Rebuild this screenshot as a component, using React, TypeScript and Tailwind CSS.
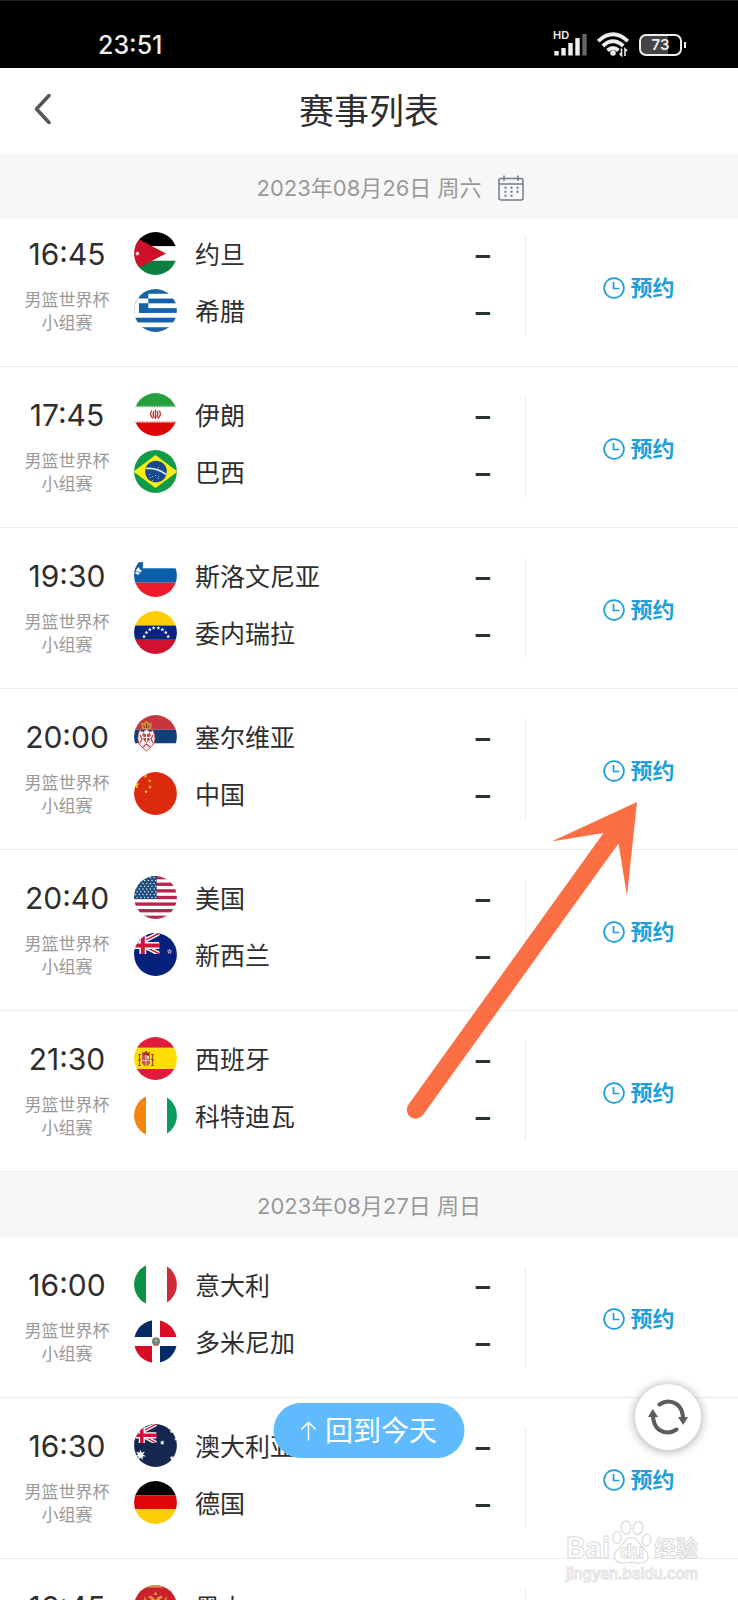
import { useId } from "react";
import type { ReactNode } from "react";

type Match = { time: string; home: [string, string]; away?: [string, string] };
type Day = { label: string; calendar?: boolean; matches: Match[] };

const days: Day[] = [
  {
    label: "2023年08月26日 周六",
    calendar: true,
    matches: [
      { time: "16:45", home: ["约旦", "jo"], away: ["希腊", "gr"] },
      { time: "17:45", home: ["伊朗", "ir"], away: ["巴西", "br"] },
      { time: "19:30", home: ["斯洛文尼亚", "si"], away: ["委内瑞拉", "ve"] },
      { time: "20:00", home: ["塞尔维亚", "rs"], away: ["中国", "cn"] },
      { time: "20:40", home: ["美国", "us"], away: ["新西兰", "nz"] },
      { time: "21:30", home: ["西班牙", "es"], away: ["科特迪瓦", "ci"] },
    ],
  },
  {
    label: "2023年08月27日 周日",
    matches: [
      { time: "16:00", home: ["意大利", "it"], away: ["多米尼加", "do"] },
      { time: "16:30", home: ["澳大利亚", "au"], away: ["德国", "de"] },
      { time: "16:45", home: ["黑山", "me"] },
    ],
  },
];

function star(cx: number, cy: number, r: number, points = 5, inner = 0.4) {
  const out: string[] = [];
  for (let i = 0; i < points * 2; i++) {
    const a = (Math.PI * i) / points - Math.PI / 2;
    const q = i % 2 ? r * inner : r;
    out.push(`${(cx + q * Math.cos(a)).toFixed(2)},${(cy + q * Math.sin(a)).toFixed(2)}`);
  }
  return out.join(" ");
}

function Bands({ colors, vertical = false, at = [14.3, 28.7] }: { colors: string[]; vertical?: boolean; at?: number[] }) {
  const edges = [0, ...at, 43];
  return (
    <>
      {colors.map((c, i) =>
        vertical ? (
          <rect key={i} x={edges[i]} width={edges[i + 1] - edges[i]} height="43" fill={c} />
        ) : (
          <rect key={i} y={edges[i]} height={edges[i + 1] - edges[i]} width="43" fill={c} />
        ),
      )}
    </>
  );
}

function UnionJack({ w, h, bg }: { w: number; h: number; bg: string }) {
  return (
    <svg x="0" y="0" width={w} height={h} viewBox="10 0 26 21" preserveAspectRatio="none">
      <rect x="-6" width="42" height="21" fill={bg} />
      <path d="M-6 0 36 21M36 0-6 21" stroke="#fff" strokeWidth="4.4" />
      <path d="M-6 0 36 21M36 0-6 21" stroke="#d0123a" strokeWidth="1.5" />
      <path d="M19 0V21M-6 12.500H36" stroke="#fff" strokeWidth="7" />
      <path d="M19 0V21M-6 12.500H36" stroke="#d0123a" strokeWidth="4" />
    </svg>
  );
}

const flags: Record<string, ReactNode> = {
  jo: (
    <>
      <Bands colors={["#000", "#fff", "#0a7f3f"]} />
      <path d="M-4 2.600 32 21.500-4 40.400Z" fill="#ce1128" />
      <polygon points={star(3.4, 21.5, 2.4, 7, 0.5)} fill="#fff" />
    </>
  ),
  gr: (
    <>
      <rect width="43" height="43" fill="#fff" />
      {[0, 1, 2, 3, 4].map((i) => (
        <rect key={i} y={i * 9.56} width="43" height="4.78" fill="#1763a8" />
      ))}
      <rect width="14.300" height="24" fill="#1763a8" />
      <path d="M0 0H5V24H0ZM0 9.500H14.300V14.300H0Z" fill="#fff" />
    </>
  ),
  ir: (
    <>
      <Bands colors={["#269f3f", "#fff", "#da0505"]} />
      <path d="M2 13.600H41M2 29.300H41" stroke="#fff" strokeWidth="1.600" strokeDasharray="1 .7" opacity=".7" />
      <path d="M21.500 16.500V26M17.800 17.500q-3 4.500 1.500 8M25.200 17.500q3 4.500-1.500 8M19.800 18q-1.500 3.500.5 6.500M23.200 18q1.500 3.500-.5 6.500" stroke="#c4302d" strokeWidth="1.200" fill="none" />
    </>
  ),
  br: (
    <>
      <rect width="43" height="43" fill="#109b48" />
      <path d="M-.5 21.500 21.500 5 43.500 21.500 21.500 38Z" fill="#ffed12" />
      <circle cx="22" cy="21.500" r="10.800" fill="#17498e" />
      <path d="M12 18.500q11-1 20 6" stroke="#dbeaf0" strokeWidth="1.600" fill="none" />
      <path d="M15 24.500h1m2 2h1m2-1h1m2 3h1m-7 2h1m5-4h1m-9 1h1m7-10h1" stroke="#a9c8e8" strokeWidth=".9" />
    </>
  ),
  si: (
    <>
      <Bands colors={["#fff", "#0b5fa8", "#ee1c2a"]} />
      <path d="M3.500 8.500 9 8 8.500 18 4 21-1 17V11Z" fill="#0b5fa8" />
      <path d="M1 19 2.500 15.500 4.500 13 6 15.500 8 17 4 21Z" fill="#fff" />
      <path d="M1 18q2-1 3 0t3 0" stroke="#0b5fa8" strokeWidth=".8" fill="none" />
    </>
  ),
  ve: (
    <>
      <Bands colors={["#ffcc08", "#03267e", "#cf1230"]} at={[14.5, 28]} />
      {[[10, 25.5], [12.5, 21.5], [15.8, 18.6], [19.6, 17], [24.4, 17], [28.4, 18.6], [31.8, 21.5], [34.2, 25.5]].map(([x, y]) => (
        <polygon key={x} points={star(x, y, 1.9, 5, 0.5)} fill="#fff" />
      ))}
    </>
  ),
  rs: (
    <>
      <Bands colors={["#c7363f", "#123f78", "#fff"]} at={[14.6, 28.5]} />
      <path d="M5.500 15Q2 25 6 30L10 34 12.500 36 15 34 19 30Q23 25 19 15L16 17 12.500 14 9 17Z" fill="#f6eeee" stroke="#b84950" strokeWidth=".9" />
      <path d="M6 20 8 24 6 28M19 20 17 24 19 28M9 32 12.500 29 16 32M10 18 8.500 21M15 18 16.500 21" stroke="#b84950" strokeWidth="1.200" fill="none" />
      <path d="M9.500 19H15.500V25L12.500 28 9.500 25Z" fill="#c7363f" />
      <path d="M12.500 19V27M9.500 22.500H15.500" stroke="#fff" strokeWidth="1.200" />
      <path d="M7 7.500 9.500 8.500 12.500 5.500 15.500 8.500 18 7.500 17 14H8Z" fill="#c9912f" />
      <path d="M9.500 10.500 11 13M12.500 8.500V13M15.500 10.500 14 13" stroke="#8f2633" strokeWidth="1" />
    </>
  ),
  cn: (
    <>
      <rect width="43" height="43" fill="#dc2a0e" />
      <polygon points={star(1.5, 13, 4.5)} fill="#ffd90f" />
      {[[11.5, 4.2], [15.8, 8.8], [16, 15.2], [12, 19.7]].map(([x, y]) => (
        <polygon key={y} points={star(x, y, 2)} fill="#ffd90f" />
      ))}
    </>
  ),
  us: (
    <>
      <rect width="43" height="43" fill="#fff" />
      {[0, 1, 2, 3, 4, 5, 6].map((i) => (
        <rect key={i} y={i * 6.61} width="43" height="3.31" fill="#b8234b" />
      ))}
      <rect width="22.700" height="23" fill="#1c4b7e" />
      {Array.from({ length: 48 }, (_, i) => (
        <circle key={i} cx={1.6 + (i % 6) * 3.7 + (Math.floor(i / 6) % 2) * 1.6} cy={1.8 + Math.floor(i / 6) * 2.8} r=".75" fill="#e3edf4" />
      ))}
    </>
  ),
  nz: (
    <>
      <rect width="43" height="43" fill="#03207c" />
      <UnionJack w={25.5} h={21} bg="#03207c" />
      <polygon points={star(35.5, 18.5, 2.4)} fill="#c8204c" stroke="#dcdcf0" strokeWidth=".6" />
    </>
  ),
  es: (
    <>
      <Bands colors={["#e01b3c", "#ffdd06", "#e01b3c"]} at={[10.8, 32]} />
      <path d="M8 18H16V26Q15 29 12 29.500 9 29 8 26Z" fill="#c4555a" />
      <path d="M12 18V29M8 23.500H16" stroke="#f4dfc0" strokeWidth=".8" />
      <path d="M13 19H15V22H13Z" fill="#e5c7da" />
      <path d="M8 14.500 10 16 12 13.500 14 16 16 14.500 15.500 18H8.500Z" fill="#a92e2e" />
      <path d="M5.500 18V28M18.500 18V28M4 28.500H7M17 28.500H20M4 23.500 7 22M17 22 20 23.500M4 17.500H7M17 17.500H20" stroke="#a64b3c" strokeWidth="1.200" />
    </>
  ),
  ci: <Bands vertical colors={["#f5830d", "#fff", "#0a9b62"]} at={[12, 33]} />,
  it: <Bands vertical colors={["#0a9246", "#fff", "#ce2b38"]} at={[12, 33]} />,
  do: (
    <>
      <rect width="43" height="43" fill="#fff" />
      <path d="M0 0H18V17H0ZM26 26H43V43H26Z" fill="#052b66" />
      <path d="M26 0H43V17H26ZM0 26H18V43H0Z" fill="#d90b25" />
      <circle cx="22" cy="21.500" r="4.200" fill="#7f8c68" />
      <path d="M20 19.500H24V22.500L22 24 20 22.500Z" fill="#345c70" />
      <path d="M22 19V24M20 21H24" stroke="#f3efe1" strokeWidth=".7" />
      <path d="M19.500 25H24.500" stroke="#c44b42" strokeWidth="1" />
    </>
  ),
  au: (
    <>
      <rect width="43" height="43" fill="#14284f" />
      <UnionJack w={22.5} h={19} bg="#14284f" />
      <polygon points={star(6.5, 31, 5.6, 7, 0.45)} fill="#fff" />
      <polygon points={star(28.3, 18.7, 2.4, 7, 0.5)} fill="#fff" />
      <polygon points={star(37.5, 7.5, 2, 7, 0.5)} fill="#fff" />
      <polygon points={star(38, 34, 2.4, 7, 0.5)} fill="#fff" />
      <polygon points={star(42, 15, 2, 7, 0.5)} fill="#fff" />
    </>
  ),
  de: <Bands colors={["#000", "#dd0606", "#ffcd05"]} at={[14.3, 28.3]} />,
  me: (
    <>
      <rect width="43" height="43" fill="#c9202b" />
      <path d="M0 0H43V2.400H0Z" fill="#d0a04a" />
      <path d="M19.500 10 21.500 6.500 23.500 10ZM19 12 16 10.500 14 12.500 17 14 18 18 13 16 10.500 11 10 18 12.500 23 16 26 19 24V30H24V24L27 26 30.500 23 33 18 32.500 11 30 16 25 18 26 14 29 12.500 27 10.500 24 12 21.500 15Z" fill="#dc9638" />
      <path d="M19 18H24V23L21.500 25 19 23Z" fill="#29639d" />
    </>
  ),
};

function Flag({ code }: { code: string }) {
  const id = useId();
  return (
    <svg viewBox="0 0 43 43" className="size-[43px] shrink-0" aria-hidden="true">
      <clipPath id={id}>
        <circle cx="21.500" cy="21.500" r="21.400" />
      </clipPath>
      <g clipPath={`url(#${id})`}>{flags[code]}</g>
    </svg>
  );
}

function Team({ team: [name, code] }: { team: [string, string] }) {
  return (
    <div className="flex h-[43px] items-start">
      <Flag code={code} />
      <span className="ml-[18px] flex-1 text-[25px] leading-[46px]">{name}</span>
      <span className="font-['Liberation_Sans',sans-serif] text-[29px] leading-[46px] font-bold">–</span>
    </div>
  );
}

function MatchRow({ match }: { match: Match }) {
  return (
    <li className="flex items-start border-b border-[#ededed] pt-[26px] pb-[30px]">
      <div className="w-[134px] shrink-0 text-center">
        <time className="block text-[30px] leading-[45px]">{match.time}</time>
        <p className="mt-3 text-[17px] leading-[23px] text-[#999]">
          男篮世界杯
          <br />
          小组赛
        </p>
      </div>
      <div className="flex min-w-0 flex-1 flex-col gap-3.5 pr-[34px]">
        <Team team={match.home} />
        {match.away && <Team team={match.away} />}
      </div>
      <div className="mt-1 flex h-[100px] w-[213px] shrink-0 items-center justify-center border-l border-[#ebebeb] pt-1 pl-3.5">
        <button type="button" className="flex items-center gap-[5px] text-[22px] leading-8 font-bold text-[#1c9fda]">
          <svg viewBox="0 0 22 22" className="size-[22px]" fill="none" stroke="currentColor" strokeWidth="1.700" aria-hidden="true">
            <circle cx="11" cy="11" r="9.900" />
            <path d="M10.500 5V11.500H16.500" />
          </svg>
          预约
        </button>
      </div>
    </li>
  );
}

function DateBar({ day }: { day: Day }) {
  return (
    <h2 className="grid h-[65px] shrink-0 grid-cols-[1fr_auto_1fr] items-center bg-[#f7f7f7] pt-0.5 text-[22px] leading-8 text-[#999]">
      <span className="col-start-2">{day.label}</span>
      {day.calendar && (
        <button type="button" aria-label="选择日期" className="ml-4 justify-self-start">
          <svg viewBox="0 0 26 26" className="block size-[26px]" fill="none" stroke="#727c86" strokeWidth="1.500" aria-hidden="true">
            <rect x="1" y="3.500" width="24" height="21.500" rx="2" />
            <path d="M1 9H25M6 .5V6M20 .5V6" />
            <path d="M6.500 12.800h2m4 0h2m4 0h2M6.500 16.800h2m4 0h2m4 0h2M6.500 20.800h2m4 0h2" strokeWidth="2" />
          </svg>
        </button>
      )}
    </h2>
  );
}

function StatusBar() {
  return (
    <div className="flex h-[68px] shrink-0 items-center justify-between border-t border-[#222] bg-black pt-5 pr-[52px] pl-[98px] text-[#eee]">
      <span className="text-[25px] leading-8 font-medium">23:51</span>
      <div className="flex items-center gap-2.5">
        <div className="relative">
          <span className="absolute -top-1 left-0 text-[11px] leading-3 font-semibold">HD</span>
          <svg viewBox="0 0 34 24" className="h-6 w-[34px]" strokeWidth="4.400" aria-hidden="true">
            <path d="M3.500 18V22.500M10.500 15V22.500M17.500 10V22.500M24.500 5V22.500" stroke="#eee" />
            <path d="M31.500 1V22.500" stroke="#666" />
          </svg>
        </div>
        <svg viewBox="0 0 32 25" className="h-[25px] w-8" fill="none" stroke="#eee" strokeWidth="3.800" aria-hidden="true">
          <path d="M1.200 9.200Q16-4.500 30.800 9.200M5.800 14Q16 4.500 26.200 14M10.500 18.500Q16 13.500 21.500 18.500" />
          <circle cx="16" cy="21" r="2.800" fill="#eee" stroke="none" />
          <path d="M24.500 16.500V23.500L22.500 21.500M28 24V17L30 19" strokeWidth="1.600" />
        </svg>
        <div className="flex items-center gap-0.5">
          <div className="flex h-[22px] w-[43px] items-center justify-center rounded-[7px] border-2 border-[#eee] bg-linear-to-r from-[#444] from-70% to-black to-70% text-[15px] leading-4 font-semibold">73</div>
          <div className="h-1.5 w-0.5 bg-[#eee]" />
        </div>
      </div>
    </div>
  );
}

function Watermark() {
  return (
    <div className="pointer-events-none absolute right-10 bottom-4 w-[132px] text-white" aria-hidden="true">
      <div className="flex h-[46px] items-end justify-between font-bold [-webkit-text-stroke:1px_#dadada]">
        <span className="text-[29px] leading-8">Bai</span>
        <span className="relative">
          <svg viewBox="0 0 40 44" className="h-11 w-10" fill="#fff" stroke="#dadada" strokeWidth="1.200">
            <ellipse cx="5" cy="17.500" rx="4.200" ry="6" />
            <ellipse cx="14" cy="7.500" rx="4.800" ry="6.600" />
            <ellipse cx="26" cy="8" rx="4.800" ry="6.600" transform="rotate(12 26 8)" />
            <ellipse cx="34.500" cy="20" rx="4.200" ry="6" transform="rotate(12 34 20)" />
            <path d="M19.500 17.500Q25 18 28 24 31 28 34.500 31.500 39 41 30 43 25 43.500 19.500 42 13 43.500 9 43 0 41 3.500 31.500 8 28 11 24 14 18 19.500 17.500Z" />
          </svg>
          <span className="absolute inset-x-0 bottom-0 text-center text-[19px] leading-6">du</span>
        </span>
        <span className="text-[22px] leading-8">经验</span>
      </div>
      <p className="text-[15px] leading-5 font-medium [-webkit-text-stroke:1px_#e2e2e2]">jingyan.baidu.com</p>
    </div>
  );
}

export default function App() {
  return (
    <div className="relative flex h-screen flex-col overflow-hidden bg-white font-[Inter,'Noto_Sans_CJK_SC',sans-serif] text-[#2e2e2e]">
      <StatusBar />
      <header className="grid h-[86px] shrink-0 grid-cols-[1fr_auto_1fr] items-center">
        <button type="button" aria-label="返回" className="ml-[34px] justify-self-start pb-1">
          <svg viewBox="0 0 17 32" className="block h-8 w-[17px]" fill="none" stroke="#555" strokeWidth="3.500" strokeLinecap="round" strokeLinejoin="round" aria-hidden="true">
            <path d="M15 2.500 2.500 16 15 29.500" />
          </svg>
        </button>
        <h1 className="text-[35px] leading-[52px]">赛事列表</h1>
      </header>
      <DateBar day={days[0]} />
      <main className="min-h-0 flex-1 overflow-hidden">
        <ul className="-mt-[13px]">
          {days[0].matches.map((m) => (
            <MatchRow key={m.time} match={m} />
          ))}
        </ul>
        <DateBar day={days[1]} />
        <ul>
          {days[1].matches.map((m) => (
            <MatchRow key={m.time} match={m} />
          ))}
        </ul>
      </main>

      <svg viewBox="0 0 232 320" className="pointer-events-none absolute top-[801px] left-[406px] h-80 w-[232px]" fill="#fa7044" aria-hidden="true">
        <path d="M231 1 145.500 40.500 197.500 32 2.500 303.500A8.800 8.800 0 0 0 17 314L212.500 42.500 221 95Z" />
      </svg>

      <button type="button" className="absolute bottom-[142px] left-1/2 flex h-[55px] w-[191px] -translate-x-1/2 items-center justify-center gap-2 rounded-full bg-[#60bafe] text-[28px] leading-10 whitespace-nowrap text-white">
        <svg viewBox="0 0 16 20" className="h-5 w-4" fill="none" stroke="currentColor" strokeWidth="1.500" aria-hidden="true">
          <path d="M8 19.500V1.500M.8 8.500 8 1.200 15.200 8.500" />
        </svg>
        回到今天
      </button>

      <button type="button" aria-label="刷新" className="absolute right-[37px] bottom-[150px] flex size-[66px] items-center justify-center rounded-full bg-white shadow-[0_1px_8px_2px_rgba(0,0,0,0.25)]">
        <svg viewBox="0 0 40 36" className="h-9 w-10" fill="none" stroke="#5c5c5c" strokeWidth="4" strokeLinecap="round" aria-hidden="true">
          <path d="M11.500 5.500Q20-.3 28.500 5Q35 9.500 35 20M28.500 30.500Q20 36.300 11.500 31Q5 26.500 5 16" />
          <path d="M30 18H40L35.200 26ZM0 18H10L4.800 10Z" fill="#5c5c5c" stroke="none" />
        </svg>
      </button>

      <Watermark />
    </div>
  );
}
